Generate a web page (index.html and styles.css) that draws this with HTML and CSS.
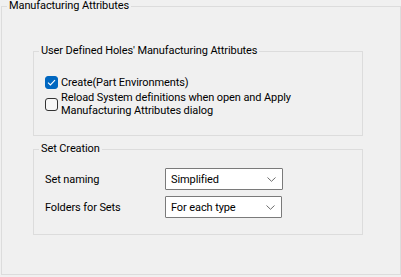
FILE: index.html
```html
<!DOCTYPE html>
<html>
<head>
<meta charset="utf-8">
<link rel="stylesheet" href="styles.css">
</head>
<body>
<fieldset class="group outer">
  <legend class="caption">Manufacturing Attributes</legend>
  <div class="outer-body">
    <fieldset class="group holes">
      <legend class="caption">User Defined Holes' Manufacturing Attributes</legend>
      <div class="holes-body">
        <div class="check-row single">
          <span class="box checked">
            <svg width="9" height="7" viewBox="0 0 9 7"><path d="M1 3.6 L3.4 6 L8 1.2" fill="none" stroke="#fff" stroke-width="1.1"/></svg>
          </span>
          <span class="check-label">Create(Part Environments)</span>
        </div>
        <div class="check-row double">
          <span class="box"></span>
          <span class="check-label">Reload System definitions when open and Apply<br>Manufacturing Attributes dialog</span>
        </div>
      </div>
    </fieldset>
    <fieldset class="group sets">
      <legend class="caption">Set Creation</legend>
      <div class="sets-body">
        <div class="field-row">
          <span class="field-label">Set naming</span>
          <div class="combo wide"><span>Simplified</span>
            <svg class="chev" width="9" height="5" viewBox="0 0 9 5"><path d="M0.5 0.5 L4.5 4.3 L8.5 0.5" fill="none" stroke="#6d6d6d" stroke-width="1"/></svg>
          </div>
        </div>
        <div class="field-row">
          <span class="field-label">Folders for Sets</span>
          <div class="combo"><span>For each type</span>
            <svg class="chev" width="9" height="5" viewBox="0 0 9 5"><path d="M0.5 0.5 L4.5 4.3 L8.5 0.5" fill="none" stroke="#6d6d6d" stroke-width="1"/></svg>
          </div>
        </div>
      </div>
    </fieldset>
  </div>
</fieldset>
</body>
</html>
```

FILE: styles.css
```css
html, body {
  margin: 0;
  padding: 0;
  background: #f0f0f0;
}
body {
  font-family: Roboto, "Noto Sans", sans-serif;
  font-size: 11px;
  letter-spacing: -0.1px;
  color: #000;
  width: 401px;
  height: 277px;
  overflow: hidden;
}
.group {
  box-sizing: border-box;
  border: 1px solid #dcdcdc;
  margin: 0;
  padding: 0;
  min-width: 0;
}
.caption {
  margin-left: 5px;
  padding: 0 2px;
  line-height: 12px;
  height: 12px;
}
.outer {
  margin-left: 1px;
  width: 400px;
  height: 275px;
}
.outer-body {
  padding: 33px 0 0 31px;
}
.holes, .sets {
  width: 330px;
}
.holes-body {
  padding: 17px 0 18px 11px;
}
.sets {
  margin-top: 7px;
}
.sets-body {
  padding: 13px 0 16px 11px;
}
.check-row {
  display: flex;
  align-items: center;
  gap: 3px;
}
.check-row.single {
  height: 16px;
}
.check-row.double {
  margin-top: 1px;
  line-height: 13px;
}
.box {
  box-sizing: border-box;
  width: 13px;
  height: 13px;
  border: 1px solid #333;
  border-radius: 3px;
  background: #f7f7f7;
  display: flex;
  align-items: center;
  justify-content: center;
  flex: none;
}
.box.checked {
  background: #0067c0;
  border-color: #0067c0;
}
.field-row {
  display: flex;
  align-items: center;
  height: 22px;
}
.field-row + .field-row {
  margin-top: 6px;
}
.field-label {
  width: 120px;
}
.combo {
  box-sizing: border-box;
  width: 117px;
  height: 22px;
  border: 1px solid #7a7a7a;
  border-radius: 1px;
  background: #fff;
  display: flex;
  align-items: center;
  justify-content: space-between;
  padding: 0 6px 0 5px;
}
.combo.wide {
  width: 118px;
}
.chev {
  display: block;
}
```
